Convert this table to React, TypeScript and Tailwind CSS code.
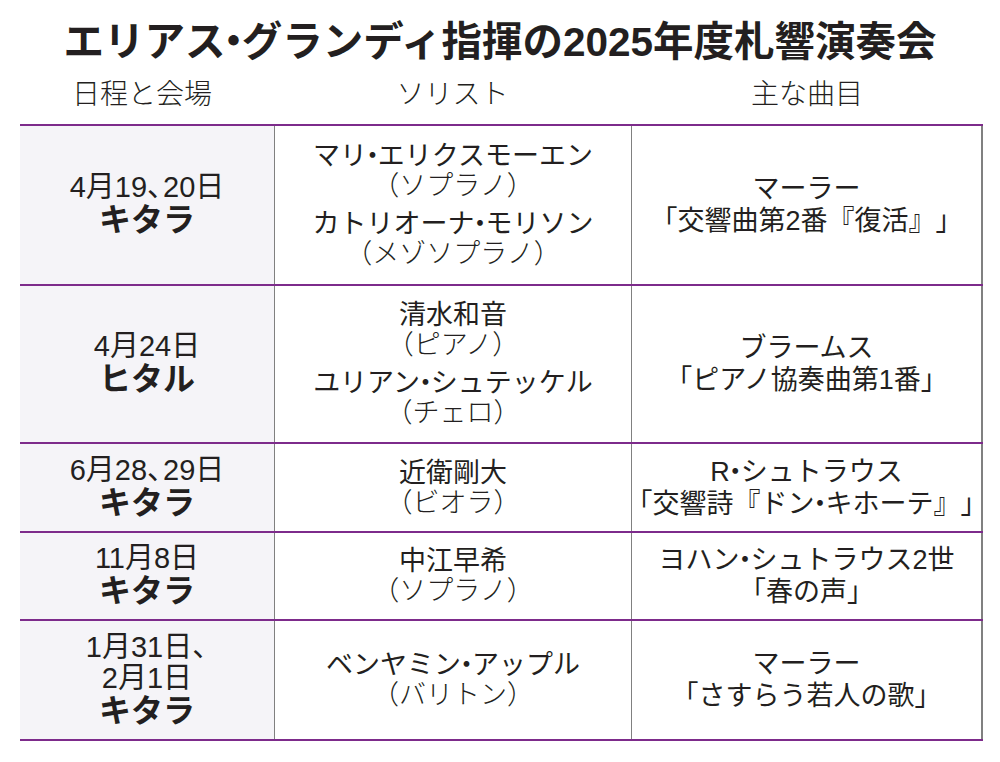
import React from 'react';

const font = {
  fontFamily: '"Liberation Sans", "Noto Sans CJK JP", sans-serif',
};

// narrow the full-width middle dot and comma, as typeset in the print table
const T = ({ s }: { s: string }) => (
  <>
    {s.split(/([・、])/).map((p, i) =>
      p === '・' ? (
        <span key={i} className="mx-[-0.3em]">・</span>
      ) : p === '、' ? (
        <span key={i} className="mr-[-0.45em]">、</span>
      ) : (
        <React.Fragment key={i}>{p}</React.Fragment>
      ),
    )}
  </>
);

type Row = {
  h: string;
  date: string[];
  hall: string;
  soloists: [string, string][];
  works: string[];
};

const rows: Row[] = [
  {
    h: 'h-[160px]',
    date: ['4月19、20日'],
    hall: 'キタラ',
    soloists: [
      ['マリ・エリクスモーエン', '（ソプラノ）'],
      ['カトリオーナ・モリソン', '（メゾソプラノ）'],
    ],
    works: ['マーラー', '「交響曲第2番『復活』」'],
  },
  {
    h: 'h-[158px]',
    date: ['4月24日'],
    hall: 'ヒタル',
    soloists: [
      ['清水和音', '（ピアノ）'],
      ['ユリアン・シュテッケル', '（チェロ）'],
    ],
    works: ['ブラームス', '「ピアノ協奏曲第1番」'],
  },
  {
    h: 'h-[89px]',
    date: ['6月28、29日'],
    hall: 'キタラ',
    soloists: [['近衛剛大', '（ビオラ）']],
    works: ['R・シュトラウス', '「交響詩『ドン・キホーテ』」'],
  },
  {
    h: 'h-[88px]',
    date: ['11月8日'],
    hall: 'キタラ',
    soloists: [['中江早希', '（ソプラノ）']],
    works: ['ヨハン・シュトラウス2世', '「春の声」'],
  },
  {
    h: 'h-[120px]',
    date: ['1月31日、', '2月1日'],
    hall: 'キタラ',
    soloists: [['ベンヤミン・アップル', '（バリトン）']],
    works: ['マーラー', '「さすらう若人の歌」'],
  },
];

export default function App() {
  return (
    <div
      className="w-[1000px] h-[762px] bg-white text-[#231f20] overflow-hidden whitespace-nowrap [text-spacing-trim:space-all]"
      style={font}
    >
      <h1 className="pt-[16px] h-[68px] text-center text-[40.5px] leading-[52px] font-bold">
        <T s="エリアス・グランディ指揮の2025年度札響演奏会" />
      </h1>
      <div className="mx-[20px] w-[963px] grid grid-cols-[254px_357px_352px] h-[56px] items-center text-[28px] font-light leading-[34px] pb-[2px]">
        <div className="text-center pr-[10px]">日程と会場</div>
        <div className="text-center">ソリスト</div>
        <div className="text-center">主な曲目</div>
      </div>
      <div className="mx-[20px] w-[963px] border-t-2 border-[#7d2b8b]">
        {rows.map((r, i) => (
          <div
            key={i}
            className={`grid grid-cols-[254px_357px_352px] border-b-2 border-[#7d2b8b] ${r.h}`}
          >
            <div className="bg-[#f5f4f8] flex flex-col items-center justify-center text-[29px] leading-[31px]">
              {r.date.map((d) => (
                <div key={d}>
                  <T s={d} />
                </div>
              ))}
              <div className="font-bold text-[32px] leading-[35px]">{r.hall}</div>
            </div>
            <div className="border-l border-[#808080] flex flex-col items-center justify-center gap-[8px] text-[27px] leading-[30px]">
              {r.soloists.map(([n, p]) => (
                <div key={n} className="flex flex-col items-center">
                  <div>
                    <T s={n} />
                  </div>
                  <div className="font-light">{p}</div>
                </div>
              ))}
            </div>
            <div className="border-l border-r-2 border-[#808080] flex flex-col items-center justify-center text-[27px] leading-[32px]">
              {r.works.map((w) => (
                <div key={w}>
                  <T s={w} />
                </div>
              ))}
            </div>
          </div>
        ))}
      </div>
    </div>
  );
}
